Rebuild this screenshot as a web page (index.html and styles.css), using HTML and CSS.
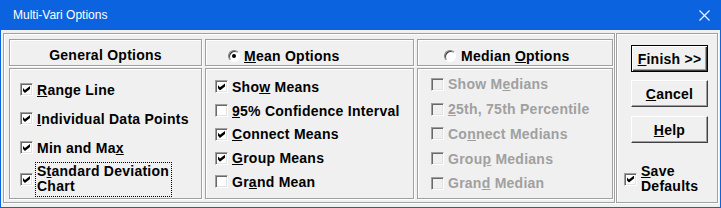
FILE: index.html
```html
<!DOCTYPE html>
<html lang="en">
<head>
  <meta charset="UTF-8">
  <title>Multi-Vari Options</title>
  <link rel="stylesheet" href="styles.css">
</head>
<body>
  <div class="window">
    <div class="titlebar">
      <span class="title">Multi-Vari Options</span>
      <svg class="close" width="11" height="11" viewBox="0 0 11 11">
        <path d="M0.5 0.5 L10.5 10.5 M10.5 0.5 L0.5 10.5" stroke="#fff" stroke-width="1.1" fill="none"/>
      </svg>
    </div>

    <div class="client">
      <!-- option groups -->
      <div class="frame main">
        <div class="cell head">General Options</div>
        <div class="cell head radio-head mean-head">
          <span class="radio on"></span>
          <span><u>M</u>ean Options</span>
        </div>
        <div class="cell head radio-head median-head">
          <span class="radio"></span>
          <span>Median <u>O</u>ptions</span>
        </div>

        <div class="cell opts general">
          <div class="opt"><span class="cb on"></span><span class="lbl"><u>R</u>ange Line</span></div>
          <div class="opt"><span class="cb on"></span><span class="lbl"><u>I</u>ndividual Data Points</span></div>
          <div class="opt"><span class="cb on"></span><span class="lbl">Min and Ma<u>x</u></span></div>
          <div class="opt tall"><span class="cb on"></span><span class="lbl focus">S<u>t</u>andard Deviation<br>Chart</span></div>
        </div>

        <div class="cell opts mean">
          <div class="opt"><span class="cb on"></span><span class="lbl">Sho<u>w</u> Means</span></div>
          <div class="opt"><span class="cb"></span><span class="lbl"><u>9</u>5% Confidence Interval</span></div>
          <div class="opt"><span class="cb on"></span><span class="lbl"><u>C</u>onnect Means</span></div>
          <div class="opt"><span class="cb on"></span><span class="lbl"><u>G</u>roup Means</span></div>
          <div class="opt"><span class="cb"></span><span class="lbl">Gr<u>a</u>nd Mean</span></div>
        </div>

        <div class="cell opts median">
          <div class="opt dis"><span class="cb"></span><span class="lbl">Show M<u>e</u>dians</span></div>
          <div class="opt dis"><span class="cb"></span><span class="lbl"><u>2</u>5th, 75th Percentile</span></div>
          <div class="opt dis"><span class="cb"></span><span class="lbl">Co<u>n</u>nect Medians</span></div>
          <div class="opt dis"><span class="cb"></span><span class="lbl">Grou<u>p</u> Medians</span></div>
          <div class="opt dis"><span class="cb"></span><span class="lbl">Gran<u>d</u> Median</span></div>
        </div>
      </div>

      <!-- buttons -->
      <div class="frame side">
        <div class="btn default"><u>F</u>inish &gt;&gt;</div>
        <div class="btn cancel"><u>C</u>ancel</div>
        <div class="btn help"><u>H</u>elp</div>
        <div class="opt save"><span class="cb on"></span><span class="lbl"><u>S</u>ave<br>Defaults</span></div>
      </div>
    </div>
  </div>
</body>
</html>
```

FILE: styles.css
```css
* {
  box-sizing: border-box;
  margin: 0;
  padding: 0;
}

body {
  font-family: "Liberation Sans", Arial, sans-serif;
  font-size: 14px;
  font-weight: bold;
  letter-spacing: 0.25px;
  color: #000;
  background-color: #f0f0f0;
}

/* window chrome */
.window {
  width: 721px;
  height: 208px;
  background-color: #0b63e0;
  display: flex;
  flex-direction: column;
}

.titlebar {
  height: 30px;
  flex: none;
  display: flex;
  align-items: center;
  justify-content: space-between;
  padding: 0 11px 0 13px;
  color: #fff;
  font-size: 12px;
  font-weight: normal;
  letter-spacing: 0;
}

.close {
  display: block;
}

.client {
  flex: 1;
  margin: 0 1px 1px;
  background-color: #f0f0f0;
  display: flex;
  gap: 1px;
  padding: 3px 0 0 2px;
}

/* etched frames */
.frame,
.cell {
  border: 1px solid #a0a0a0;
  box-shadow: inset 1px 1px 0 #fff, 1px 1px 0 #fff;
}

.main {
  width: 612px;
  height: 170px;
  padding: 5px 1px 3px 5px;
  display: grid;
  grid-template-columns: 193px 209px 196px;
  grid-template-rows: 27px 131px;
  column-gap: 3px;
  row-gap: 2px;
}

.head {
  padding-top: 7px;
  line-height: 16px;
  text-align: center;
}

.radio-head {
  display: flex;
  align-items: center;
  height: 27px;
  padding-top: 6px;
  text-align: left;
}

.mean-head {
  padding-left: 22px;
  gap: 4px;
}

.median-head {
  padding-left: 26px;
  gap: 5px;
}

.radio {
  width: 12px;
  height: 12px;
  flex: none;
  border-radius: 50%;
  border: 1px solid;
  border-color: #808080 #fff #fff #808080;
  box-shadow: inset 1px 1px 0 #404040;
  background-color: #fff;
  position: relative;
}

.radio.on::after {
  content: "";
  position: absolute;
  left: 3px;
  top: 3px;
  width: 4px;
  height: 4px;
  border-radius: 50%;
  background-color: #000;
}

/* checkbox lists */
.general {
  padding: 6px 0 0 10px;
}

.mean {
  padding: 6px 0 0 9px;
}

.median {
  padding: 3px 0 0 13px;
}

.opt {
  display: flex;
  align-items: center;
}

.general .opt {
  height: 29px;
}

.general .opt.tall {
  height: 35px;
}

.mean .opt {
  height: 23.75px;
}

.median .opt {
  height: 24.75px;
}

.cb {
  width: 13px;
  height: 13px;
  flex: none;
  border: 1px solid;
  border-color: #a0a0a0 #fff #fff #a0a0a0;
  box-shadow: inset 1px 1px 0 #696969, inset -1px -1px 0 #e3e3e3;
  background-color: #fff;
  position: relative;
}

.cb.on::after {
  content: "";
  position: absolute;
  left: 2px;
  top: 2px;
  width: 7px;
  height: 7px;
  background-color: #000;
  clip-path: polygon(0 28%, 28% 57%, 100% 0, 100% 43%, 28% 100%, 0 71%);
}

.lbl {
  margin-left: 2px;
  padding: 0 2px;
  line-height: 16px;
  white-space: nowrap;
}

.focus {
  height: 35px;
  padding: 2px 3px 0 2px;
  line-height: 15px;
  outline: 1px dotted #000;
  outline-offset: -1px;
}

.dis .lbl {
  color: #a0a0a0;
}

.dis .cb {
  background-color: #f0f0f0;
}

/* button column */
.side {
  width: 102px;
  height: 170px;
  display: flex;
  flex-direction: column;
  padding: 11px 9px 8px 14px;
}

.btn {
  width: 77px;
  height: 27px;
  flex: none;
  display: flex;
  align-items: center;
  justify-content: center;
  background-color: #f0f0f0;
  border: 1px solid;
  border-color: #fff #404040 #404040 #fff;
  box-shadow: inset -1px -1px 0 #a0a0a0;
}

.btn.default {
  border-color: #000;
  box-shadow: inset 1px 1px 0 #fff, inset -1px -1px 0 #404040, inset -2px -2px 0 #a0a0a0;
}

.cancel {
  margin-top: 8px;
}

.help {
  margin-top: 9px;
}

.save {
  margin-top: auto;
  margin-left: -7px;
}

.save .lbl {
  line-height: 15px;
}
```
